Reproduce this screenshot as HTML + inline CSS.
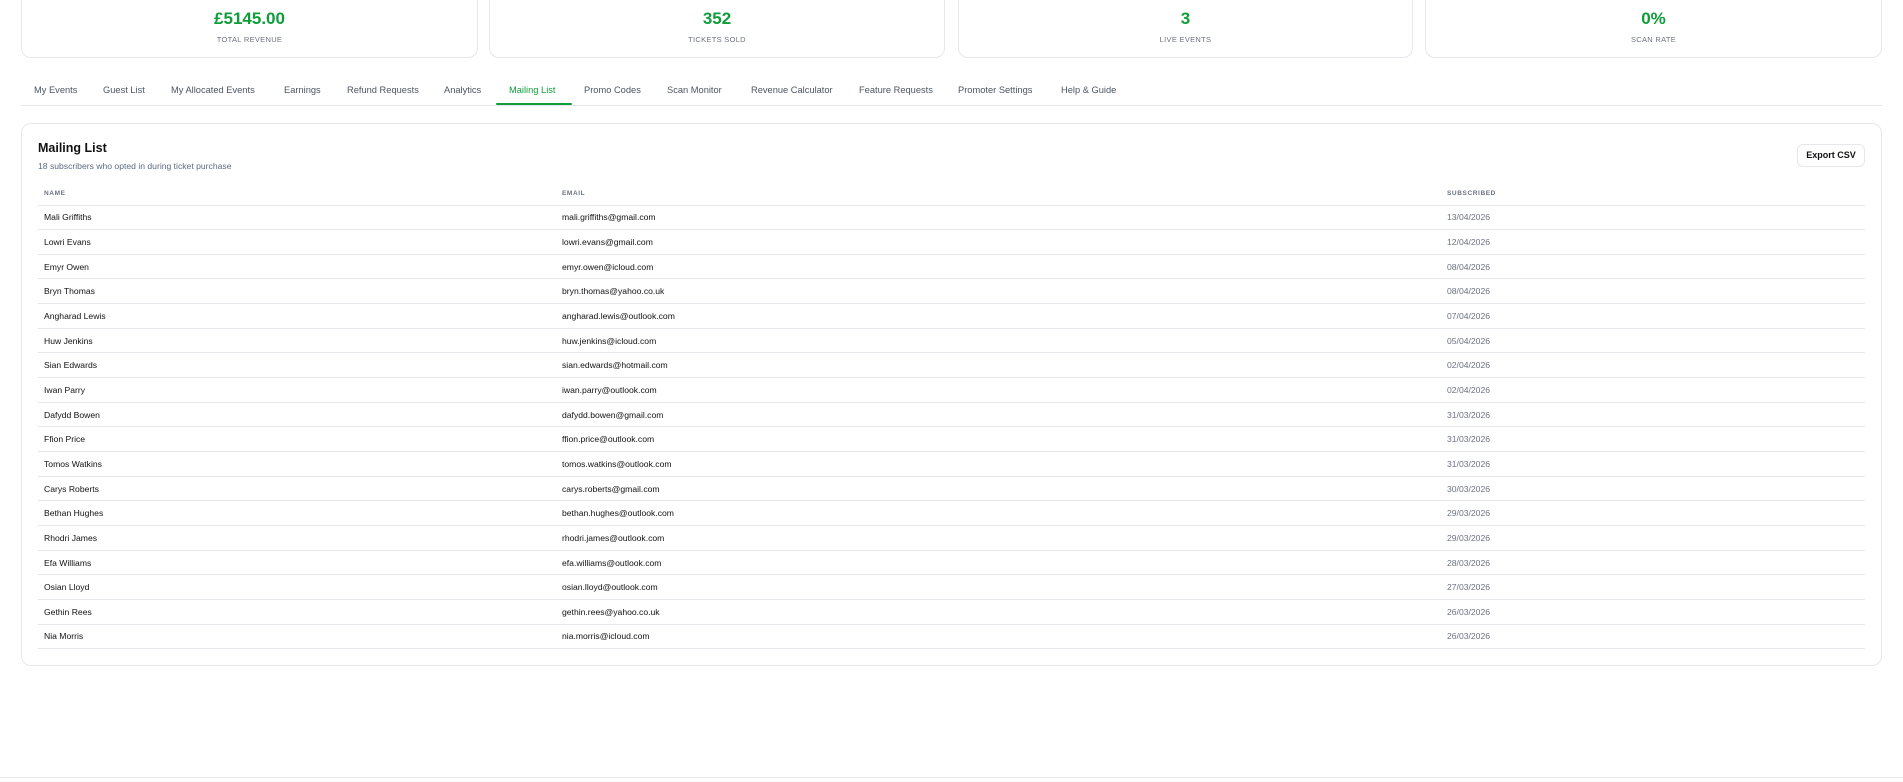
<!DOCTYPE html>
<html><head><meta charset="utf-8"><style>
*{box-sizing:border-box;margin:0;padding:0}
body{width:1903px;height:782px;background:#fff;font-family:"Liberation Sans",sans-serif;position:relative;overflow:hidden;color:#111}
.stat{position:absolute;top:-12px;height:70px;border:1px solid #e5e7eb;border-radius:10px;text-align:center}
.stat .v{position:absolute;top:20px;left:0;right:0;font-size:17px;font-weight:bold;color:#0f9d3a}
.stat .l{position:absolute;top:46px;left:0;right:0;font-size:7.5px;color:#6b7280;letter-spacing:.3px}
.tabs{position:absolute;top:82px;left:21px;right:21px;height:24px;border-bottom:1px solid #e5e7eb}
.tab{position:absolute;top:3px;font-size:9.3px;color:#4b5563;white-space:nowrap}
.tab.a{color:#0f9d3a}
.ul{position:absolute;top:21px;height:2px;background:#0f9d3a;border-radius:2px}
.card{position:absolute;left:21px;top:123px;width:1861px;height:543px;border:1px solid #e5e7eb;border-radius:10px}
h2{position:absolute;left:38px;top:141px;font-size:12.5px;font-weight:bold}
.sub{position:absolute;left:38px;top:161px;font-size:8.6px;color:#5b6b80}
.btn{position:absolute;left:1797px;top:144px;width:68px;height:23px;border:1px solid #e5e7eb;border-radius:6px;font-size:9px;font-weight:bold;text-align:center;line-height:21px}
table{position:absolute;left:38px;top:182px;width:1827px;border-collapse:collapse}
th{font-size:6.5px;color:#6b7280;text-align:left;letter-spacing:.6px;height:23px;border-bottom:1px solid #e5e7eb;padding-left:6px;font-weight:bold}
td{font-size:8.6px;height:24.67px;border-bottom:1px solid #e5e7eb;padding-left:6px}
td:nth-child(3){color:#6b7280}
.bl{position:absolute;left:0;right:0;top:777px;border-top:1px solid #e5e7eb}
</style></head><body>
<div class="stat" style="left:21px;width:457px"><div class="v">£5145.00</div><div class="l">TOTAL REVENUE</div></div>
<div class="stat" style="left:489px;width:456px"><div class="v">352</div><div class="l">TICKETS SOLD</div></div>
<div class="stat" style="left:958px;width:455px"><div class="v">3</div><div class="l">LIVE EVENTS</div></div>
<div class="stat" style="left:1425px;width:457px"><div class="v">0%</div><div class="l">SCAN RATE</div></div>
<div class="tabs">
<span class="tab" style="left:13px">My Events</span>
<span class="tab" style="left:82px">Guest List</span>
<span class="tab" style="left:150px">My Allocated Events</span>
<span class="tab" style="left:263px">Earnings</span>
<span class="tab" style="left:326px">Refund Requests</span>
<span class="tab" style="left:423px">Analytics</span>
<span class="tab a" style="left:488px">Mailing List</span>
<span class="tab" style="left:563px">Promo Codes</span>
<span class="tab" style="left:646px">Scan Monitor</span>
<span class="tab" style="left:730px">Revenue Calculator</span>
<span class="tab" style="left:838px">Feature Requests</span>
<span class="tab" style="left:937px">Promoter Settings</span>
<span class="tab" style="left:1040px">Help &amp; Guide</span>
<div class="ul" style="left:475px;width:76px"></div>
</div>
<div class="card"></div>
<h2>Mailing List</h2>
<div class="sub">18 subscribers who opted in during ticket purchase</div>
<div class="btn">Export CSV</div>
<table>
<tr><th style="width:518px">NAME</th><th style="width:885px">EMAIL</th><th>SUBSCRIBED</th></tr>
<tr><td>Mali Griffiths</td><td>mali.griffiths@gmail.com</td><td>13/04/2026</td></tr>
<tr><td>Lowri Evans</td><td>lowri.evans@gmail.com</td><td>12/04/2026</td></tr>
<tr><td>Emyr Owen</td><td>emyr.owen@icloud.com</td><td>08/04/2026</td></tr>
<tr><td>Bryn Thomas</td><td>bryn.thomas@yahoo.co.uk</td><td>08/04/2026</td></tr>
<tr><td>Angharad Lewis</td><td>angharad.lewis@outlook.com</td><td>07/04/2026</td></tr>
<tr><td>Huw Jenkins</td><td>huw.jenkins@icloud.com</td><td>05/04/2026</td></tr>
<tr><td>Sian Edwards</td><td>sian.edwards@hotmail.com</td><td>02/04/2026</td></tr>
<tr><td>Iwan Parry</td><td>iwan.parry@outlook.com</td><td>02/04/2026</td></tr>
<tr><td>Dafydd Bowen</td><td>dafydd.bowen@gmail.com</td><td>31/03/2026</td></tr>
<tr><td>Ffion Price</td><td>ffion.price@outlook.com</td><td>31/03/2026</td></tr>
<tr><td>Tomos Watkins</td><td>tomos.watkins@outlook.com</td><td>31/03/2026</td></tr>
<tr><td>Carys Roberts</td><td>carys.roberts@gmail.com</td><td>30/03/2026</td></tr>
<tr><td>Bethan Hughes</td><td>bethan.hughes@outlook.com</td><td>29/03/2026</td></tr>
<tr><td>Rhodri James</td><td>rhodri.james@outlook.com</td><td>29/03/2026</td></tr>
<tr><td>Efa Williams</td><td>efa.williams@outlook.com</td><td>28/03/2026</td></tr>
<tr><td>Osian Lloyd</td><td>osian.lloyd@outlook.com</td><td>27/03/2026</td></tr>
<tr><td>Gethin Rees</td><td>gethin.rees@yahoo.co.uk</td><td>26/03/2026</td></tr>
<tr><td>Nia Morris</td><td>nia.morris@icloud.com</td><td>26/03/2026</td></tr>
</table>
<div class="bl"></div>
</body></html>
